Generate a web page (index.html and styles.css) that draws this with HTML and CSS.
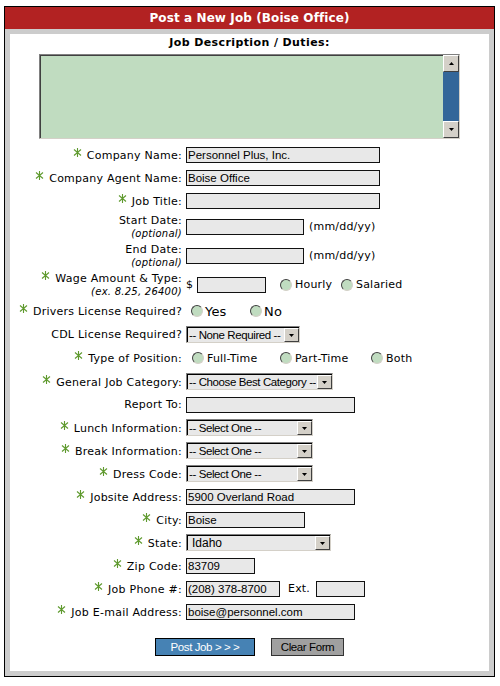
FILE: index.html
```html
<!DOCTYPE html>
<html lang="en">
<head>
<meta charset="utf-8">
<title>Post a New Job</title>
<link rel="stylesheet" href="styles.css">
</head>
<body>
<div class="frame">
  <div class="title">Post a New Job (Boise Office)</div>
  <form class="panel">
    <div class="desc-label">Job Description / Duties:</div>
    <div class="desc">
      <textarea class="desc-text"></textarea>
      <div class="scrollbar">
        <span class="sb-btn"><svg width="5" height="3" viewBox="0 0 5 3"><path d="M0 3H5L2.5 0Z"/></svg></span>
        <span class="sb-track"></span>
        <span class="sb-btn"><svg width="5" height="3" viewBox="0 0 5 3"><path d="M0 0H5L2.5 3Z"/></svg></span>
      </div>
    </div>

    <div class="rows">
      <div class="row">
        <label class="lbl"><svg class="req" viewBox="0 0 9 9"><path d="M4.5 0V9M1 1.5L8 7.5M1 7.5L8 1.5"/></svg>Company Name:</label>
        <div class="fld"><input class="txt w194" value="Personnel Plus, Inc."></div>
      </div>
      <div class="row">
        <label class="lbl"><svg class="req" viewBox="0 0 9 9"><path d="M4.5 0V9M1 1.5L8 7.5M1 7.5L8 1.5"/></svg>Company Agent Name:</label>
        <div class="fld"><input class="txt w194" value="Boise Office"></div>
      </div>
      <div class="row">
        <label class="lbl"><svg class="req" viewBox="0 0 9 9"><path d="M4.5 0V9M1 1.5L8 7.5M1 7.5L8 1.5"/></svg>Job Title:</label>
        <div class="fld"><input class="txt w194" value=""></div>
      </div>
      <div class="row tall">
        <label class="lbl two">Start Date:<br><em class="hint">(optional)</em></label>
        <div class="fld"><input class="txt w118" value=""><span class="after">(mm/dd/yy)</span></div>
      </div>
      <div class="row tall">
        <label class="lbl two">End Date:<br><em class="hint">(optional)</em></label>
        <div class="fld"><input class="txt w118" value=""><span class="after">(mm/dd/yy)</span></div>
      </div>
      <div class="row tall">
        <label class="lbl two"><svg class="req" viewBox="0 0 9 9"><path d="M4.5 0V9M1 1.5L8 7.5M1 7.5L8 1.5"/></svg>Wage Amount &amp; Type:<br><em class="hint">(ex. 8.25, 26400)</em></label>
        <div class="fld">
          <span class="dollar">$</span><input class="txt w69" value="">
          <label class="opt o-hourly"><input type="radio" class="radio" name="wt">Hourly</label>
          <label class="opt"><input type="radio" class="radio" name="wt">Salaried</label>
        </div>
      </div>
      <div class="row r24">
        <label class="lbl"><svg class="req" viewBox="0 0 9 9"><path d="M4.5 0V9M1 1.5L8 7.5M1 7.5L8 1.5"/></svg>Drivers License Required?</label>
        <div class="fld pad5">
          <label class="opt big o-yes"><input type="radio" class="radio" name="dl">Yes</label>
          <label class="opt big"><input type="radio" class="radio" name="dl">No</label>
        </div>
      </div>
      <div class="row">
        <label class="lbl">CDL License Required?</label>
        <div class="fld"><span class="sel w114"><select><option>-- None Required --</option></select><span class="sel-btn"><svg width="5" height="3" viewBox="0 0 5 3"><path d="M0 0H5L2.5 3Z"/></svg></span></span></div>
      </div>
      <div class="row r24">
        <label class="lbl"><svg class="req" viewBox="0 0 9 9"><path d="M4.5 0V9M1 1.5L8 7.5M1 7.5L8 1.5"/></svg>Type of Position:</label>
        <div class="fld pad6">
          <label class="opt o-full"><input type="radio" class="radio" name="tp">Full-Time</label>
          <label class="opt o-part"><input type="radio" class="radio" name="tp">Part-Time</label>
          <label class="opt"><input type="radio" class="radio" name="tp">Both</label>
        </div>
      </div>
      <div class="row">
        <label class="lbl"><svg class="req" viewBox="0 0 9 9"><path d="M4.5 0V9M1 1.5L8 7.5M1 7.5L8 1.5"/></svg>General Job Category:</label>
        <div class="fld"><span class="sel w147"><select><option>-- Choose Best Category --</option></select><span class="sel-btn"><svg width="5" height="3" viewBox="0 0 5 3"><path d="M0 0H5L2.5 3Z"/></svg></span></span></div>
      </div>
      <div class="row">
        <label class="lbl">Report To:</label>
        <div class="fld"><input class="txt w169" value=""></div>
      </div>
      <div class="row">
        <label class="lbl"><svg class="req" viewBox="0 0 9 9"><path d="M4.5 0V9M1 1.5L8 7.5M1 7.5L8 1.5"/></svg>Lunch Information:</label>
        <div class="fld"><span class="sel w127"><select><option>-- Select One --</option></select><span class="sel-btn"><svg width="5" height="3" viewBox="0 0 5 3"><path d="M0 0H5L2.5 3Z"/></svg></span></span></div>
      </div>
      <div class="row">
        <label class="lbl"><svg class="req" viewBox="0 0 9 9"><path d="M4.5 0V9M1 1.5L8 7.5M1 7.5L8 1.5"/></svg>Break Information:</label>
        <div class="fld"><span class="sel w127"><select><option>-- Select One --</option></select><span class="sel-btn"><svg width="5" height="3" viewBox="0 0 5 3"><path d="M0 0H5L2.5 3Z"/></svg></span></span></div>
      </div>
      <div class="row">
        <label class="lbl"><svg class="req" viewBox="0 0 9 9"><path d="M4.5 0V9M1 1.5L8 7.5M1 7.5L8 1.5"/></svg>Dress Code:</label>
        <div class="fld"><span class="sel w127"><select><option>-- Select One --</option></select><span class="sel-btn"><svg width="5" height="3" viewBox="0 0 5 3"><path d="M0 0H5L2.5 3Z"/></svg></span></span></div>
      </div>
      <div class="row">
        <label class="lbl"><svg class="req" viewBox="0 0 9 9"><path d="M4.5 0V9M1 1.5L8 7.5M1 7.5L8 1.5"/></svg>Jobsite Address:</label>
        <div class="fld"><input class="txt w169" value="5900 Overland Road"></div>
      </div>
      <div class="row">
        <label class="lbl"><svg class="req" viewBox="0 0 9 9"><path d="M4.5 0V9M1 1.5L8 7.5M1 7.5L8 1.5"/></svg>City:</label>
        <div class="fld"><input class="txt w119" value="Boise"></div>
      </div>
      <div class="row">
        <label class="lbl"><svg class="req" viewBox="0 0 9 9"><path d="M4.5 0V9M1 1.5L8 7.5M1 7.5L8 1.5"/></svg>State:</label>
        <div class="fld"><span class="sel w145"><select class="state"><option>Idaho</option></select><span class="sel-btn"><svg width="5" height="3" viewBox="0 0 5 3"><path d="M0 0H5L2.5 3Z"/></svg></span></span></div>
      </div>
      <div class="row">
        <label class="lbl"><svg class="req" viewBox="0 0 9 9"><path d="M4.5 0V9M1 1.5L8 7.5M1 7.5L8 1.5"/></svg>Zip Code:</label>
        <div class="fld"><input class="txt w69" value="83709"></div>
      </div>
      <div class="row">
        <label class="lbl"><svg class="req" viewBox="0 0 9 9"><path d="M4.5 0V9M1 1.5L8 7.5M1 7.5L8 1.5"/></svg>Job Phone #:</label>
        <div class="fld"><input class="txt w94" value="(208) 378-8700"><span class="ext">Ext.</span><input class="txt w49" value=""></div>
      </div>
      <div class="row">
        <label class="lbl"><svg class="req" viewBox="0 0 9 9"><path d="M4.5 0V9M1 1.5L8 7.5M1 7.5L8 1.5"/></svg>Job E-mail Address:</label>
        <div class="fld"><input class="txt w169" value="boise@personnel.com"></div>
      </div>
    </div>

    <div class="actions">
      <button type="submit" class="btn btn-post">Post Job &gt; &gt; &gt;</button>
      <button type="reset" class="btn btn-clear">Clear Form</button>
    </div>
  </form>
</div>
</body>
</html>
```

FILE: styles.css
```css
* { box-sizing: border-box; }

body {
  margin: 0;
  padding: 6px 0 0 4px;
  background: #fff;
  color: #000;
  font-family: "DejaVu Sans", Verdana, sans-serif;
  font-size: 11px;
}

.frame {
  width: 491px;
  border: 1px solid #000;
  background: #cccccc;
}

.title {
  height: 22px;
  background: #b22222;
  color: #fff;
  font-weight: bold;
  font-size: 12px;
  letter-spacing: 0.1px;
  line-height: 22px;
  text-align: center;
}

.panel {
  margin: 5px;
  background: #fff;
  padding: 2px 0 15px;
}

.desc-label {
  font-weight: bold;
  text-align: center;
  line-height: 14px;
  letter-spacing: 0.4px;
}

.desc {
  display: flex;
  width: 421px;
  height: 85px;
  margin: 4px auto 4px;
  border: 1px solid;
  border-color: #808080 #d4d0c8 #d4d0c8 #808080;
  box-shadow: inset 1px 1px 0 #404040;
  background: #c0dcc0;
}

.desc-text {
  flex: 1;
  border: 0;
  margin: 0;
  background: transparent;
  resize: none;
  outline: none;
}

.scrollbar {
  width: 16px;
  display: flex;
  flex-direction: column;
}

.sb-btn {
  height: 17px;
  display: flex;
  align-items: center;
  justify-content: center;
  background: #d4d0c8;
  border: 1px solid;
  border-color: #fff #404040 #404040 #fff;
}

.sb-track {
  flex: 1;
  background: #336699;
}

.rows {
  display: flex;
  flex-direction: column;
}

.row {
  display: flex;
  align-items: center;
  min-height: 23px;
}

.row.tall { min-height: 29px; }
.row.r24 { min-height: 24px; }

.lbl {
  width: 172px;
  flex: none;
  margin-right: 4px;
  text-align: right;
  white-space: nowrap;
  letter-spacing: 0.25px;
}

.lbl.two { line-height: 13px; }

.hint {
  font-size: 10px;
  font-style: italic;
}

.req {
  width: 9px;
  height: 9px;
  margin-right: 5px;
  vertical-align: 2px;
  fill: none;
  stroke: #5f9a2e;
  stroke-width: 1.1;
}

.fld {
  display: flex;
  align-items: center;
  letter-spacing: 0.2px;
}

.pad5 { padding-left: 5px; }
.pad6 { padding-left: 6px; }

.txt {
  height: 16px;
  margin: 0;
  padding: 0 1px;
  border: 1px solid #111;
  background: #e8e8e8;
  font-family: "Liberation Sans", Arial, sans-serif;
  font-size: 11.5px;
  letter-spacing: 0;
  color: #000;
}

.w49 { width: 49px; }
.w69 { width: 69px; }
.w94 { width: 94px; }
.w118 { width: 118px; }
.w119 { width: 119px; }
.w169 { width: 169px; }
.w194 { width: 194px; }
.w114 { width: 114px; }
.w127 { width: 127px; }
.w145 { width: 145px; }
.w147 { width: 147px; }

.after { margin-left: 5px; }
.dollar { width: 11px; }
.ext { margin: 0 6px 0 8px; }

.opt {
  display: inline-flex;
  align-items: center;
  gap: 3px;
}

.opt.big { font-size: 13px; gap: 2px; }
.o-hourly { margin-left: 14px; width: 61px; }
.o-yes { width: 59px; }
.o-full { width: 88px; }
.o-part { width: 91px; }

.radio {
  appearance: none;
  -webkit-appearance: none;
  width: 12px;
  height: 12px;
  margin: 0;
  border-radius: 50%;
  background: #c0dcc0;
  border: 1px solid;
  border-color: #404040 #d4d0c8 #d4d0c8 #404040;
  flex: none;
}

.sel {
  display: inline-flex;
  height: 17px;
  border: 1px solid;
  border-color: #808080 #d4d0c8 #d4d0c8 #808080;
  box-shadow: inset 1px 1px 0 #000;
  background: #e8e8e8;
  padding: 1px 0 0 1px;
}

.sel select {
  flex: 1;
  min-width: 0;
  height: 100%;
  margin: 0;
  padding: 0 1px;
  border: 0;
  background: transparent;
  appearance: none;
  -webkit-appearance: none;
  font-family: "Liberation Sans", Arial, sans-serif;
  font-size: 11.5px;
  letter-spacing: -0.4px;
  color: #000;
  outline: none;
}

.sel select.state { padding-left: 4px; font-size: 12px; letter-spacing: 0; }

.sel-btn {
  width: 15px;
  flex: none;
  display: flex;
  align-items: center;
  justify-content: center;
  background: #d4d0c8;
  border: 1px solid;
  border-color: #fff #404040 #404040 #fff;
}

.actions {
  display: flex;
  justify-content: center;
  gap: 16px;
  margin-top: 15px;
}

.btn {
  height: 18px;
  padding: 0;
  border: 1px solid #000;
  font-family: "Liberation Sans", Arial, sans-serif;
  font-size: 11.5px;
  letter-spacing: -0.4px;
}

.btn-post {
  width: 100px;
  background: #4682b4;
  color: #fff;
}

.btn-clear {
  width: 73px;
  background: #a0a0a0;
  color: #000;
  border-color: #333;
}
```
